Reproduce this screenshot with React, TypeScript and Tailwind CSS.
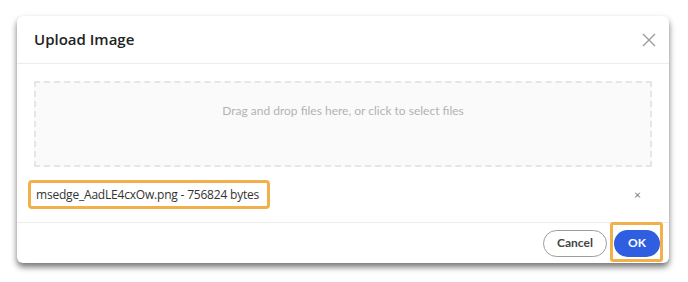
import React from "react";

export default function App() {
  return (
    <div className="w-[688px] h-[282px] bg-white pt-[16px] pl-[17px]">
      <div className="w-[652px] h-[247px] bg-white rounded-[6px] shadow-[0_4px_6px_rgba(0,0,0,0.55)] flex flex-col">
        <div className="h-[48px] flex items-center justify-between pl-[17px] pr-[13px] border-b border-[#ececec]">
          <span className="text-[15px] font-semibold text-[#222] font-['Open_Sans',sans-serif]">
            Upload Image
          </span>
          <svg width="14" height="14" viewBox="0 0 14 14">
            <path d="M1 1 L13 13 M13 1 L1 13" stroke="#9a9a9a" strokeWidth="1.3" fill="none" />
          </svg>
        </div>
        <div className="flex-1 px-[17px] pt-[17px] flex flex-col">
          <div className="h-[86px] bg-[#fafafa] border-2 border-dashed border-[#e6e6e6] flex justify-center pt-[19px]">
            <span className="text-[12px] leading-[18px] text-[#b3b3b3] font-['Lato',sans-serif]">
              Drag and drop files here, or click to select files
            </span>
          </div>
          <div className="mt-[14px] h-[28px] flex items-center justify-between pr-[11px]">
            <span className="relative pl-[2px] text-[12px] leading-[16px] tracking-[-0.2px] text-[#333] font-['Open_Sans',sans-serif]">
              msedge_AadLE4cxOw.png - 756824 bytes
              <span className="absolute left-[-6px] right-[-11px] top-[-7px] bottom-[-6px] border-[3px] border-[#f2b04a] rounded-[4px]" />
            </span>
            <span className="text-[12px] text-[#777] font-['Lato',sans-serif]">×</span>
          </div>
        </div>
        <div className="h-[41px] border-t border-[#ececec] flex items-center justify-end gap-[7px] pr-[9px]">
          <button className="h-[27px] w-[64px] rounded-full border border-[#9c9c9c] bg-white text-[12px] font-bold text-[#444] font-['Lato',sans-serif]">
            Cancel
          </button>
          <div className="relative">
            <button className="h-[27px] w-[46px] rounded-full bg-[#2f5fe0] text-[12px] font-bold text-white font-['Lato',sans-serif]">
              OK
            </button>
            <span className="absolute left-[-4px] right-[-3px] top-[-7px] bottom-[-5px] border-[3px] border-[#f2b04a] rounded-[3px]" />
          </div>
        </div>
      </div>
    </div>
  );
}
